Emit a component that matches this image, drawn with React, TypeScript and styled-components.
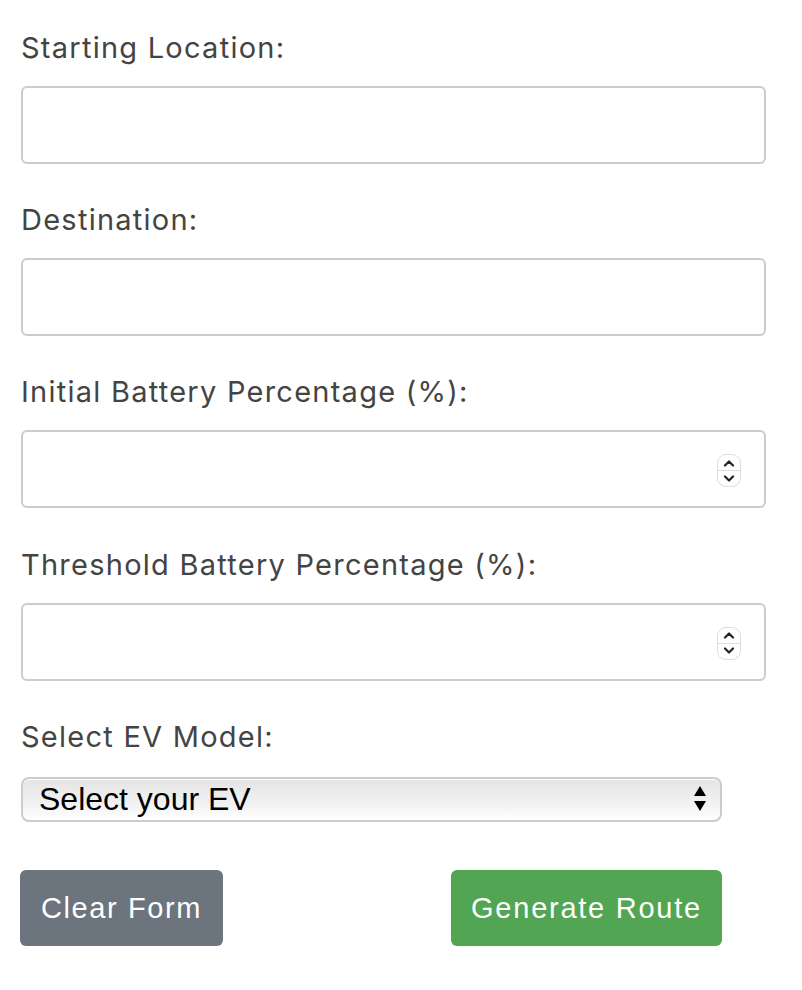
import React from "react";
import styled, { createGlobalStyle } from "styled-components";

const Global = createGlobalStyle`
  html, body { margin: 0; padding: 0; background: #ffffff; }
  body { font-family: Inter, "Liberation Sans", Arial, sans-serif; }
  * { box-sizing: border-box; }
`;

const Form = styled.form`
  display: flex;
  flex-direction: column;
  padding: 29px 36px 0 21px;
  width: 802px;
`;

const Group = styled.div`
  display: flex;
  flex-direction: column;
  margin-bottom: 37.2px;
`;

const Label = styled.label`
  display: block;
  font-family: Inter, "Liberation Sans", Arial, sans-serif;
  font-size: 29px;
  letter-spacing: 1.25px;
  line-height: 38px;
  color: #444444;
  margin-bottom: 19px;
`;

const FieldWrap = styled.div`
  position: relative;
  width: 745px;
`;

const Input = styled.input`
  display: block;
  width: 100%;
  height: 78px;
  border: 2px solid #cccccc;
  border-radius: 6px;
  background: #ffffff;
  font-size: 28px;
  padding: 0 16px;
  outline: none;
  appearance: textfield;
  -moz-appearance: textfield;
  &::-webkit-outer-spin-button,
  &::-webkit-inner-spin-button {
    -webkit-appearance: none;
    margin: 0;
  }
`;

const Spinner = styled.div`
  position: absolute;
  right: 25px;
  top: 24px;
  width: 24px;
  height: 33px;
  border: 1px solid #dddddd;
  border-radius: 9px;
  background: #ffffff;
  display: flex;
  flex-direction: column;
  overflow: hidden;
`;

const SpinHalf = styled.div<{ $top?: boolean }>`
  flex: 1;
  display: flex;
  align-items: center;
  justify-content: center;
  border-bottom: ${(p) => (p.$top ? "1px solid #dddddd" : "none")};
`;

const SelectBox = styled.div`
  position: relative;
  width: 701px;
  height: 45px;
  margin-top: 2px;
  border: 2px solid #cccccc;
  border-radius: 8px;
  background: linear-gradient(to bottom, #e4e4e4 0%, #f0f0f0 55%, #ffffff 100%);
  display: flex;
  align-items: center;
  padding: 0 12px 0 16px;
  box-shadow: inset 0 1px 0 #ffffff;
`;

const SelectText = styled.span`
  flex: 1;
  font-family: "Liberation Sans", Arial, sans-serif;
  font-size: 32px;
  line-height: 1;
  color: #000000;
`;

const Arrows = styled.svg`
  width: 14px;
  height: 28px;
  margin-right: 1px;
`;

const ButtonRow = styled.div`
  display: flex;
  justify-content: space-between;
  width: 702px;
  margin-top: 11.3px;
  margin-left: -1px;
`;

const Button = styled.button<{ $variant: "gray" | "green" }>`
  height: 76px;
  border: none;
  border-radius: 6px;
  padding: 0;
  color: #ffffff;
  font-family: "Liberation Sans", Arial, sans-serif;
  font-size: 29px;
  letter-spacing: ${(p) => (p.$variant === "gray" ? "1.6px" : "1.75px")};
  background: ${(p) => (p.$variant === "gray" ? "#6c757d" : "#52a553")};
  width: ${(p) => (p.$variant === "gray" ? "203px" : "271px")};
  cursor: pointer;
`;

function Chevron({ up }: { up?: boolean }) {
  return (
    <svg width="12" height="8" viewBox="0 0 12 8">
      <path
        d={up ? "M2 6.5 L6 2.5 L10 6.5" : "M2 1.5 L6 5.5 L10 1.5"}
        fill="none"
        stroke="#222222"
        strokeWidth="2.2"
        strokeLinecap="round"
        strokeLinejoin="round"
      />
    </svg>
  );
}

function NumberSpinner() {
  return (
    <Spinner>
      <SpinHalf $top>
        <Chevron up />
      </SpinHalf>
      <SpinHalf>
        <Chevron />
      </SpinHalf>
    </Spinner>
  );
}

export default function App() {
  return (
    <>
      <Global />
      <Form onSubmit={(e) => e.preventDefault()}>
        <Group>
          <Label htmlFor="start">Starting Location:</Label>
          <FieldWrap>
            <Input id="start" type="text" />
          </FieldWrap>
        </Group>
        <Group>
          <Label htmlFor="dest">Destination:</Label>
          <FieldWrap>
            <Input id="dest" type="text" />
          </FieldWrap>
        </Group>
        <Group>
          <Label htmlFor="init">Initial Battery Percentage (%):</Label>
          <FieldWrap>
            <Input id="init" type="number" />
            <NumberSpinner />
          </FieldWrap>
        </Group>
        <Group>
          <Label htmlFor="thr">Threshold Battery Percentage (%):</Label>
          <FieldWrap>
            <Input id="thr" type="number" />
            <NumberSpinner />
          </FieldWrap>
        </Group>
        <Group>
          <Label htmlFor="ev">Select EV Model:</Label>
          <SelectBox id="ev">
            <SelectText>Select your EV</SelectText>
            <Arrows viewBox="0 0 14 28">
              <path d="M7 1 L13 11 L1 11 Z" fill="#000000" />
              <path d="M1 16 L13 16 L7 26 Z" fill="#000000" />
            </Arrows>
          </SelectBox>
        </Group>
        <ButtonRow>
          <Button type="button" $variant="gray">
            Clear Form
          </Button>
          <Button type="submit" $variant="green">
            Generate Route
          </Button>
        </ButtonRow>
      </Form>
    </>
  );
}
